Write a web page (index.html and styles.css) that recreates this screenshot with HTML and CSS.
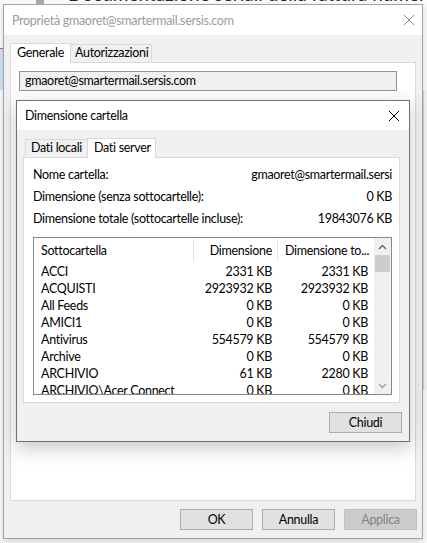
FILE: index.html
```html
<!DOCTYPE html>
<html lang="it">
<head>
<meta charset="utf-8">
<title>Dimensione cartella</title>
<link rel="stylesheet" href="styles.css">
</head>
<body>
<div class="backdrop">
  <div class="bd-bar"></div>
  <div class="bd-title">Documentazione seriali della fattura numero VEU/2020</div>
  <div class="bd-left"></div>
  <div class="bd-right"></div>
</div>

<div class="win outer">
  <div class="titlebar">
    <span class="title">Proprietà gmaoret@smartermail.sersis.com</span>
    <svg class="close" width="12" height="12" viewBox="0 0 12 12"><path d="M1 1L11 11M11 1L1 11" stroke="#8a8a8a" stroke-width="1"/></svg>
  </div>
  <div class="outer-body">
    <div class="tabs">
      <div class="tab sel">Generale</div>
      <div class="tab">Autorizzazioni</div>
    </div>
    <div class="panel outer-panel">
      <div class="field">gmaoret@smartermail.sersis.com</div>
    </div>
    <div class="buttons">
      <div class="btn">OK</div>
      <div class="btn">Annulla</div>
      <div class="btn disabled">Applica</div>
    </div>
  </div>
</div>

<div class="win inner">
  <div class="titlebar inner-title">
    <span class="title">Dimensione cartella</span>
    <svg class="close" width="12" height="12" viewBox="0 0 12 12"><path d="M1 1L11 11M11 1L1 11" stroke="#000" stroke-width="1"/></svg>
  </div>
  <div class="inner-body">
    <div class="tabs itabs">
      <div class="tab first">Dati locali</div>
      <div class="tab sel">Dati server</div>
    </div>
    <div class="panel inner-panel">
      <div class="info">
        <div class="irow"><span>Nome cartella:</span><span>gmaoret@smartermail.sersi</span></div>
        <div class="irow"><span>Dimensione (senza sottocartelle):</span><span>0 KB</span></div>
        <div class="irow"><span>Dimensione totale (sottocartelle incluse):</span><span>19843076 KB</span></div>
      </div>
      <div class="list">
        <div class="list-main">
          <div class="lhead">
            <div class="c1 hc sep">Sottocartella</div>
            <div class="c2 hc sep">Dimensione</div>
            <div class="c3 hc">Dimensione to...</div>
          </div>
          <div class="lrows">
            <div class="lrow"><div class="c1">ACCI</div><div class="c2">2331 KB</div><div class="c3 r">2331 KB</div></div>
            <div class="lrow"><div class="c1">ACQUISTI</div><div class="c2">2923932 KB</div><div class="c3 r">2923932 KB</div></div>
            <div class="lrow"><div class="c1">All Feeds</div><div class="c2">0 KB</div><div class="c3 r">0 KB</div></div>
            <div class="lrow"><div class="c1">AMICI1</div><div class="c2">0 KB</div><div class="c3 r">0 KB</div></div>
            <div class="lrow"><div class="c1">Antivirus</div><div class="c2">554579 KB</div><div class="c3 r">554579 KB</div></div>
            <div class="lrow"><div class="c1">Archive</div><div class="c2">0 KB</div><div class="c3 r">0 KB</div></div>
            <div class="lrow"><div class="c1">ARCHIVIO</div><div class="c2">61 KB</div><div class="c3 r">2280 KB</div></div>
            <div class="lrow"><div class="c1">ARCHIVIO\Acer Connect</div><div class="c2">0 KB</div><div class="c3 r">0 KB</div></div>
          </div>
        </div>
        <div class="vscroll">
          <div class="sarrow"><svg width="9" height="6" viewBox="0 0 9 6"><path d="M1 5L4.5 1.5L8 5" fill="none" stroke="#606060" stroke-width="1.3"/></svg></div>
          <div class="thumb"></div>
          <div class="track"></div>
          <div class="sarrow"><svg width="9" height="6" viewBox="0 0 9 6"><path d="M1 1L4.5 4.5L8 1" fill="none" stroke="#a0a0a0" stroke-width="1.3"/></svg></div>
        </div>
      </div>
    </div>
    <div class="ibuttons">
      <div class="btn">Chiudi</div>
    </div>
  </div>
</div>
</body>
</html>
```

FILE: styles.css
```css
* { box-sizing: border-box; }
html, body { margin: 0; padding: 0; }
body {
  width: 427px;
  height: 543px;
  overflow: hidden;
  position: relative;
  background: #e9e9e9;
  font-family: "Lato", "Noto Sans", sans-serif;
  font-size: 12.5px;
  letter-spacing: -0.3px;
  color: #000;
}

/* background application, partly visible */
.backdrop { position: absolute; left: 0; top: 0; right: 0; bottom: 0; background: #fafafa; overflow: hidden; }
.bd-bar { position: absolute; left: 36px; top: 0; width: 8px; height: 5px; background: #a9a9a9; }
.bd-title {
  position: absolute; left: 68px; top: -18px;
  font-size: 19px; color: #262626; white-space: nowrap; letter-spacing: 0;
}
.bd-left { position: absolute; left: 0; top: 48px; width: 3px; height: 42px; background: #cfe3f5; border-top: 1px solid #e05050; }
.bd-right { position: absolute; right: 0; top: 90px; width: 4px; height: 300px; background: #f4f4f4; border-left: 1px solid #d8d8d8; }

/* windows */
.win {
  position: absolute;
  display: flex;
  flex-direction: column;
  background: #f0f0f0;
  white-space: nowrap;
}
.outer {
  left: 3px; top: 4px; width: 420px; height: 535px;
  border: 1px solid #a3a3a3;
  box-shadow: 0 3px 6px rgba(0,0,0,0.14);
}
.inner {
  left: 16px; top: 100px; width: 394px; height: 342px;
  border: 1px solid #707070;
  box-shadow: 0 6px 18px rgba(0,0,0,0.22);
}

.titlebar {
  height: 30px;
  flex: none;
  background: #fff;
  display: flex;
  align-items: center;
  justify-content: space-between;
  padding: 0 7px 0 8px;
}
.outer .title { color: #9b9b9b; }
.inner-title { height: 29px; padding: 0 9px 0 8px; }

/* outer body */
.outer-body {
  flex: 1;
  display: flex;
  flex-direction: column;
  padding: 8px 0 7px 6px;
}
.tabs { display: flex; align-items: flex-end; height: 19px; flex: none; position: relative; z-index: 1; }
.tab {
  height: 17px;
  padding: 0 4px;
  border: 1px solid #d9d9d9;
  border-bottom: none;
  background: #f0f0f0;
  line-height: 16px;
  margin-bottom: 1px;
}
.tab.sel {
  height: 20px;
  background: #fff;
  margin-bottom: -1px;
  line-height: 18px;
  padding: 0 6px;
}
.outer-body .tab.sel { width: 61px; }
.outer-body .tab:not(.sel) { width: 82px; margin-left: -1px; }

.panel { background: #fff; border: 1px solid #d9d9d9; }
.outer-panel {
  height: 439px;
  margin-right: 6px;
  padding: 8px;
  flex: none;
}
.field {
  width: 378px; height: 20px;
  background: #f0f0f0;
  border: 1px solid #959595;
  padding: 0 5px;
  line-height: 18px;
}
.buttons {
  margin-top: 8px;
  display: flex;
  justify-content: flex-end;
  gap: 9px;
  padding-right: 5px;
}
.btn {
  width: 73px; height: 21px;
  background: #e1e1e1;
  border: 1px solid #adadad;
  text-align: center;
  line-height: 19px;
}
.btn.disabled { background: #cccccc; border-color: #bfbfbf; color: #838383; }

/* inner body */
.inner-body {
  flex: 1;
  display: flex;
  flex-direction: column;
  padding: 8px 0 9px 6px;
}
.itabs .tab.first { width: 63px; margin-left: 2px; padding: 0 5px; }
.itabs .tab.sel { width: 69px; margin-left: -1px; height: 20px; }
.inner-panel {
  height: 246px;
  margin-right: 9px;
  padding: 6px 7px 0 9px;
  flex: none;
}
.irow { display: flex; justify-content: space-between; height: 22px; line-height: 22px; }

.list {
  margin-top: 7px;
  width: 359px;
  height: 158px;
  border: 1px solid #828790;
  display: flex;
  background: #fff;
}
.list-main { width: 340px; overflow: hidden; }
.lhead { display: flex; height: 25px; align-items: stretch; }
.hc { line-height: 25px; position: relative; }
.hc.sep::after {
  content: ""; position: absolute; right: 0; top: 1px; bottom: 1px; width: 1px; background: #e5e5e5;
}
.c1 { width: 160px; padding-left: 7px; overflow: hidden; flex: none; }
.c2 { width: 84px; padding-right: 6px; text-align: right; flex: none; }
.c3 { width: 96px; padding-left: 7px; flex: none; overflow: hidden; }
.c3.r { padding-left: 0; padding-right: 6px; text-align: right; }
.lrows { height: 131px; overflow: hidden; }
.lrow { display: flex; height: 17px; line-height: 17px; }

.vscroll { width: 17px; display: flex; flex-direction: column; background: #f0f0f0; flex: none; }
.sarrow { height: 17px; display: flex; align-items: center; justify-content: center; flex: none; }
.thumb { height: 17px; margin: 0 1px; background: #cdcdcd; flex: none; }
.track { flex: 1; }

.ibuttons { margin-top: 9px; display: flex; justify-content: flex-end; padding-right: 7px; }
```
